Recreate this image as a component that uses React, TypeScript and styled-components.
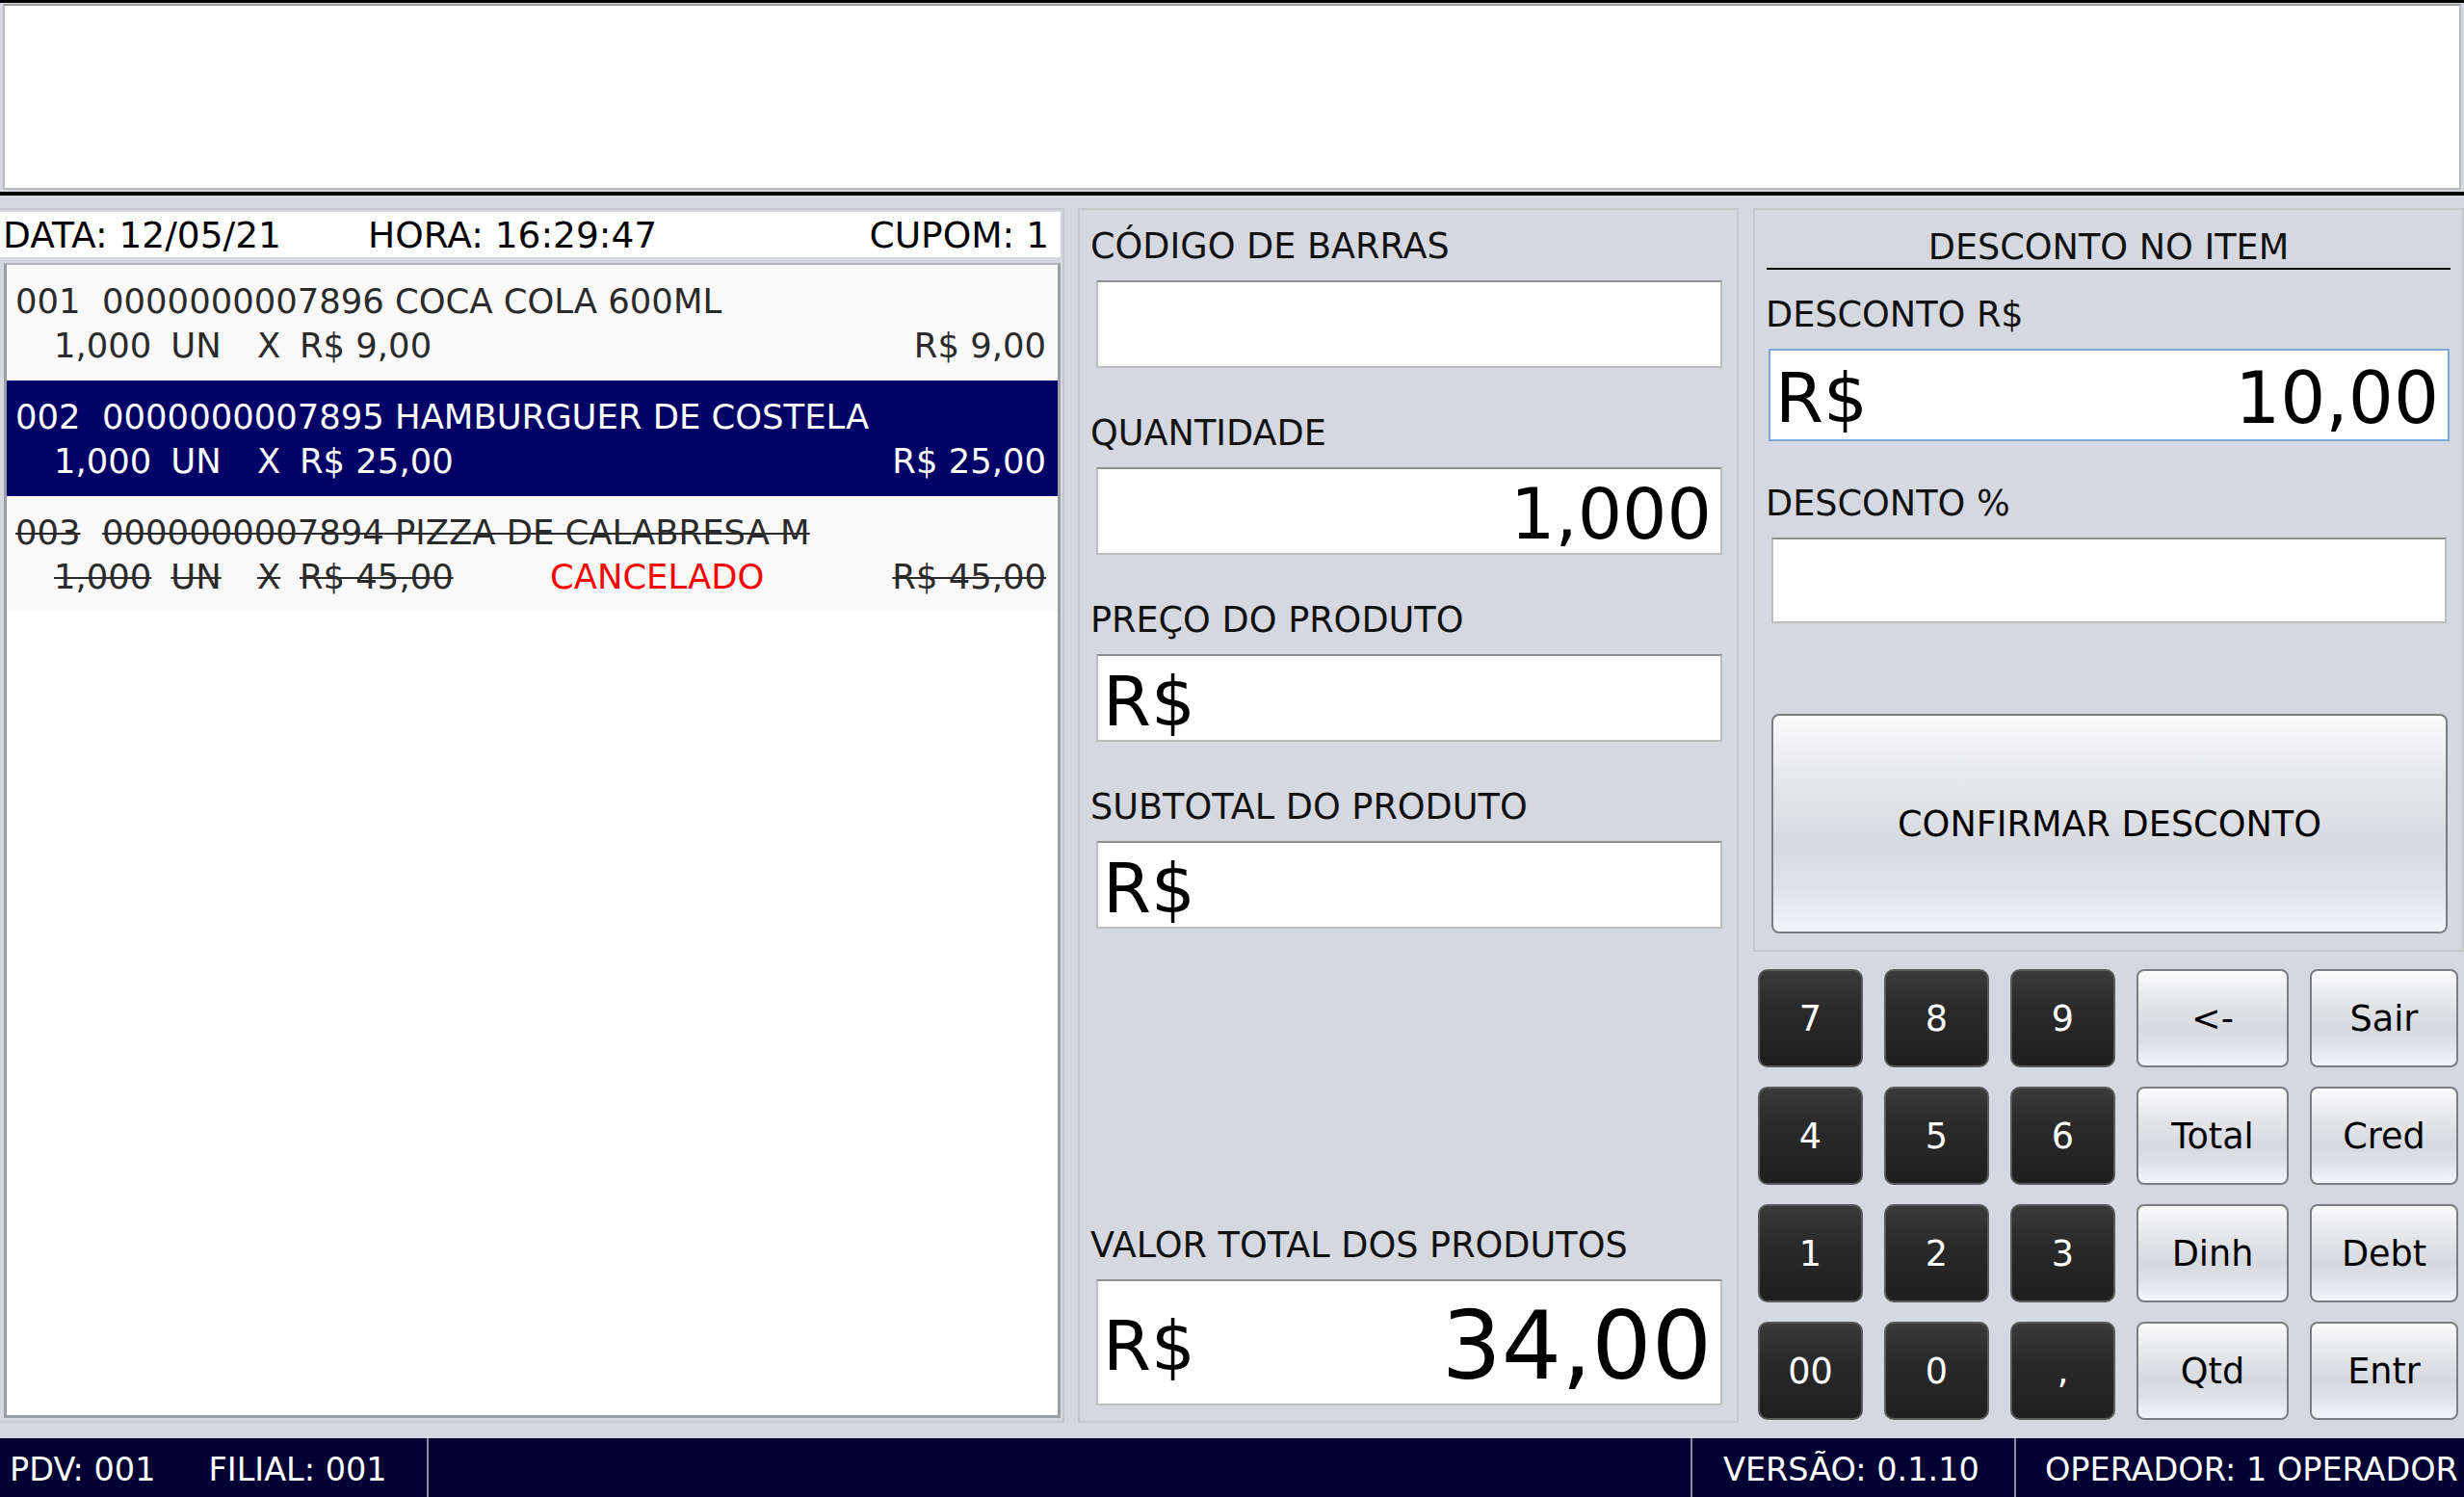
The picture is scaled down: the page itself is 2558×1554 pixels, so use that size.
import styled, { createGlobalStyle, css } from "styled-components"

const GlobalStyle = createGlobalStyle`
    html, body {
        margin: 0;
        padding: 0;
        background: #d5d8e0;
    }
    * {
        box-sizing: border-box;
    }
    body {
        font-family: "DejaVu Sans", Verdana, sans-serif;
    }
`

const Page = styled.div`
    width: 2558px;
    height: 1554px;
    display: flex;
    flex-direction: column;
    overflow: hidden;
`

const Display = styled.div`
    height: 203px;
    border-top: 3px solid #000;
    border-bottom: 4px solid #000;
    padding: 1px 3px 2px 3px;
    background: #d5d8e0;
    display: flex;
`

const Screen = styled.div`
    flex: 1;
    background: #fff;
    border: 2px solid #b9b9b9;
    border-top-color: #9c9c9c;
`

const Main = styled.div`
    flex: 1;
    display: grid;
    grid-template-columns: 1105px 686px 739px;
    column-gap: 14px;
    padding: 13px 0 16px 0;
    background: #d5d8e0;
`

const Panel = styled.div`
    border: 2px solid #c5c7cb;
    display: flex;
    flex-direction: column;
`

const LeftPanel = styled(Panel)`
    border-left: none;
    padding: 2px 2px 3px 0;
`

const Header = styled.div`
    height: 47px;
    background: #fff;
    display: flex;
    align-items: center;
    padding: 0 12px 0 3px;
    font-size: 37.5px;
    color: #000;
`

const HeaderItem = styled.span<{ $left?: number }>`
    margin-left: ${p => p.$left ?? 0}px;
`

const Spacer = styled.div`
    flex: 1;
`

const List = styled.div`
    flex: 1;
    margin: 6px 0 0 4px;
    background: #fff;
    border: 3px solid #9a9ea8;
    border-top-width: 2px;
    border-top-color: #b4b7be;
`

const Row = styled.div<{ $selected?: boolean; $cancelled?: boolean }>`
    height: 120px;
    padding: 15px 12px 0 9px;
    font-size: 35.4px;
    line-height: 46px;
    background: ${p => (p.$selected ? "#000066" : "#f9f9f9")};
    color: ${p => (p.$selected ? "#fff" : "#2a2a2a")};
    ${p => p.$cancelled && css`
        span.strike {
            text-decoration: line-through;
            text-decoration-thickness: 2px;
        }
    `}
`

const RowTop = styled.div`
    white-space: pre;
`

const RowBottom = styled.div`
    display: grid;
    grid-template-columns: 211px 44px 260px 1fr auto;
    padding-left: 40px;
    white-space: pre;
`

const Unit = styled.span`
    margin-left: 20px;
`

const Status = styled.span`
    color: #ff0000;
`

const MiddlePanel = styled(Panel)`
    padding: 16px 15px 16px 11px;
`

const Field = styled.div`
    display: flex;
    flex-direction: column;
    margin-bottom: 46px;
`

const TotalField = styled(Field)`
    margin-top: auto;
    margin-bottom: 0;
`

const Label = styled.div`
    font-size: 36.6px;
    line-height: 44px;
    color: #111;
    margin-bottom: 13px;
    white-space: pre;
`

const Input = styled.div<{ $h: number; $size?: number; $focus?: boolean; $indent?: number }>`
    height: ${p => p.$h}px;
    margin-left: ${p => p.$indent ?? 6}px;
    background: #fff;
    border: 2px solid ${p => (p.$focus ? "#7ea7d8" : "#bdbdbd")};
    border-top-color: ${p => (p.$focus ? "#7ea7d8" : "#8f8f8f")};
    display: flex;
    align-items: center;
    justify-content: space-between;
    padding: 6px 9px 0 5px;
    font-size: ${p => p.$size ?? 73}px;
    line-height: 1;
    color: #000;
`

const Value = styled.span<{ $size?: number }>`
    margin-left: auto;
    ${p => p.$size && `font-size: ${p.$size}px;`}
`

const RightColumn = styled.div`
    display: flex;
    flex-direction: column;
    margin-left: 1px;
`

const RightPanel = styled(Panel)`
    height: 772px;
    padding: 18px 12px 0 11px;
`

const Title = styled.div`
    font-size: 36.6px;
    line-height: 42px;
    text-align: center;
    border-bottom: 2px solid #000;
    margin: 0 0 25px 1px;
    color: #111;
`

const RightField = styled.div<{ $gap: number }>`
    display: flex;
    flex-direction: column;
    margin-bottom: ${p => p.$gap}px;
`

const keyBase = css`
    display: flex;
    align-items: center;
    justify-content: center;
    font-family: "DejaVu Sans", Verdana, sans-serif;
    font-size: 36.6px;
    cursor: pointer;
`

const lightKey = css`
    ${keyBase};
    color: #000;
    border: 2px solid #7b7d82;
    border-radius: 8px;
    background: linear-gradient(180deg, #fbfbfc 0%, #e9eaed 25%, #d6d9de 60%, #dfe3ea 80%, #f2f5fc 100%);
`

const ConfirmButton = styled.button`
    ${lightKey};
    height: 228px;
    margin: 0 0 0 6px;
    width: 702px;
`

const Keypad = styled.div`
    display: grid;
    grid-template-columns: 109px 109px 109px 158px 154px;
    grid-auto-rows: 102px;
    column-gap: 22px;
    row-gap: 20px;
    margin: 18px 0 0 5px;
`

const Key = styled.button<{ $dark?: boolean }>`
    ${p => (p.$dark ? css`
        ${keyBase};
        color: #fff;
        border: 2px solid #5a5a5a;
        border-radius: 10px;
        background: linear-gradient(180deg, #3a3a3a 0%, #2a2a2a 40%, #1f1f1f 100%);
    ` : lightKey)}
`

const StatusBar = styled.div`
    height: 61px;
    background: #000033;
    color: #fff;
    display: flex;
    font-size: 33.5px;
`

const StatusCell = styled.div<{ $w?: number; $pad?: number }>`
    ${p => (p.$w ? `width: ${p.$w}px;` : "flex: 1;")}
    display: flex;
    align-items: center;
    padding: 4px 0 0 ${p => p.$pad ?? 0}px;
    border-left: 2px solid #8c8ca4;
    white-space: pre;
    &:first-child {
        border-left: none;
    }
`

const StatusItem = styled.span<{ $left?: number }>`
    margin-left: ${p => p.$left ?? 0}px;
`

const items = [
    { n: "001", code: "0000000007896", name: "COCA COLA 600ML", qty: "1,000", un: "UN", price: "R$ 9,00", total: "R$ 9,00" },
    { n: "002", code: "0000000007895", name: "HAMBURGUER DE COSTELA", qty: "1,000", un: "UN", price: "R$ 25,00", total: "R$ 25,00", selected: true },
    { n: "003", code: "0000000007894", name: "PIZZA DE CALABRESA M", qty: "1,000", un: "UN", price: "R$ 45,00", total: "R$ 45,00", cancelled: true },
]

const keys = [
    ["7", true], ["8", true], ["9", true], ["<-", false], ["Sair", false],
    ["4", true], ["5", true], ["6", true], ["Total", false], ["Cred", false],
    ["1", true], ["2", true], ["3", true], ["Dinh", false], ["Debt", false],
    ["00", true], ["0", true], [",", true], ["Qtd", false], ["Entr", false],
] as const

const App = () => {
    return (
        <Page>
            <GlobalStyle />
            <Display>
                <Screen />
            </Display>
            <Main>
                <LeftPanel>
                    <Header>
                        <HeaderItem>DATA: 12/05/21</HeaderItem>
                        <HeaderItem $left={90}>HORA: 16:29:47</HeaderItem>
                        <Spacer />
                        <HeaderItem>CUPOM: 1</HeaderItem>
                    </Header>
                    <List>
                        {items.map(item => (
                            <Row key={item.n} $selected={item.selected} $cancelled={item.cancelled}>
                                <RowTop>
                                    <span className="strike">{item.n}</span>
                                    {"  "}
                                    <span className="strike">{item.code} {item.name}</span>
                                </RowTop>
                                <RowBottom>
                                    <span><span className="strike">{item.qty}</span><Unit className="strike">{item.un}</Unit></span>
                                    <span><span className="strike">X</span></span>
                                    <span><span className="strike">{item.price}</span></span>
                                    <span>{item.cancelled && <Status>CANCELADO</Status>}</span>
                                    <span className="strike">{item.total}</span>
                                </RowBottom>
                            </Row>
                        ))}
                    </List>
                </LeftPanel>

                <MiddlePanel>
                    <Field>
                        <Label>CÓDIGO DE BARRAS</Label>
                        <Input $h={91} />
                    </Field>
                    <Field>
                        <Label>QUANTIDADE</Label>
                        <Input $h={91}>
                            <Value>1,000</Value>
                        </Input>
                    </Field>
                    <Field>
                        <Label>PREÇO DO PRODUTO</Label>
                        <Input $h={91} $size={72}>
                            <span>R$</span>
                        </Input>
                    </Field>
                    <Field>
                        <Label>SUBTOTAL DO PRODUTO</Label>
                        <Input $h={91} $size={72}>
                            <span>R$</span>
                        </Input>
                    </Field>
                    <TotalField>
                        <Label>VALOR TOTAL DOS PRODUTOS</Label>
                        <Input $h={131} $size={72}>
                            <span>R$</span>
                            <Value $size={98}>34,00</Value>
                        </Input>
                    </TotalField>
                </MiddlePanel>

                <RightColumn>
                    <RightPanel>
                        <Title>DESCONTO NO ITEM</Title>
                        <RightField $gap={43}>
                            <Label>DESCONTO R$</Label>
                            <Input $h={96} $size={72} $focus $indent={3} style={{ marginRight: 1 }}>
                                <span>R$</span>
                                <Value $size={74}>10,00</Value>
                            </Input>
                        </RightField>
                        <RightField $gap={94}>
                            <Label>DESCONTO %</Label>
                            <Input $h={89} $indent={6} style={{ marginRight: 4 }} />
                        </RightField>
                        <ConfirmButton>CONFIRMAR DESCONTO</ConfirmButton>
                    </RightPanel>
                    <Keypad>
                        {keys.map(([label, dark]) => (
                            <Key key={label} $dark={dark}>{label}</Key>
                        ))}
                    </Keypad>
                </RightColumn>
            </Main>
            <StatusBar>
                <StatusCell $w={443} $pad={10}>
                    <StatusItem>PDV: 001</StatusItem>
                    <StatusItem $left={55}>FILIAL: 001</StatusItem>
                </StatusCell>
                <StatusCell />
                <StatusCell $w={336} $pad={32}>VERSÃO: 0.1.10</StatusCell>
                <StatusCell $w={467} $pad={30}>OPERADOR: 1 OPERADOR</StatusCell>
            </StatusBar>
        </Page>
    )
}

export default App
